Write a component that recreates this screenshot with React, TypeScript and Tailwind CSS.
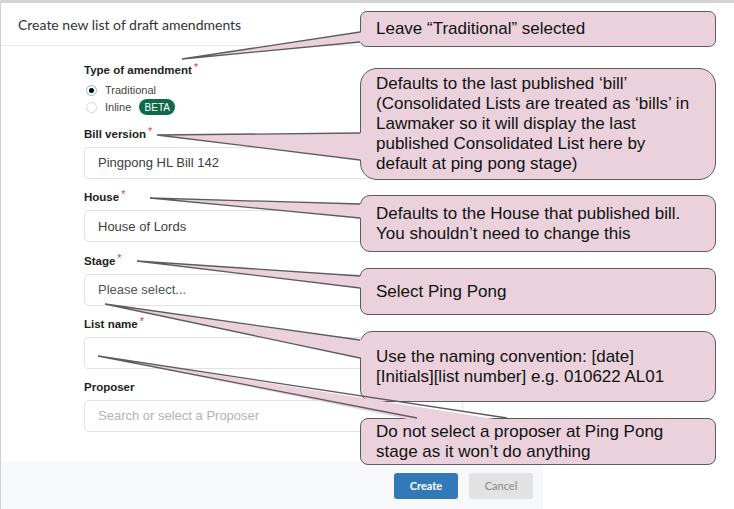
import React from "react";

const fields = [
  { label: "Bill version", required: true, value: "Pingpong HL Bill 142", tone: "text-[#3d3d3d]" },
  { label: "House", required: true, value: "House of Lords", tone: "text-[#3d3d3d]" },
  { label: "Stage", required: true, value: "Please select...", tone: "text-[#555]" },
  { label: "List name", required: true, value: "", tone: "text-[#3d3d3d]" },
  { label: "Proposer", required: false, value: "Search or select a Proposer", tone: "text-[#b3b3b3]" },
];

const callouts = [
  { top: 11, h: 36, r: "rounded-[7px]", lines: ["Leave “Traditional” selected"] },
  {
    top: 68,
    h: 112,
    r: "rounded-[17px]",
    lines: [
      "Defaults to the last published ‘bill’",
      "(Consolidated Lists are treated as ‘bills’ in",
      "Lawmaker so it will display the last",
      "published Consolidated List here by",
      "default at ping pong stage)",
    ],
  },
  {
    top: 195,
    h: 57,
    r: "rounded-[10px]",
    lines: ["Defaults to the House that published bill.", "You shouldn’t need to change this"],
  },
  { top: 268, h: 47, r: "rounded-[8px]", lines: ["Select Ping Pong"] },
  {
    top: 331,
    h: 71,
    r: "rounded-[12px]",
    lines: ["Use the naming convention: [date]", "[Initials][list number] e.g. 010622 AL01"],
  },
  {
    top: 418,
    h: 47,
    r: "rounded-[8px]",
    lines: ["Do not select a proposer at Ping Pong", "stage as it won’t do anything"],
  },
];

// tip, then the two base points on the box edge
const tails: [number, number][][] = [
  [[182, 59], [360, 32], [360, 42]],
  [[157, 135], [360, 133], [360, 160]],
  [[150, 198], [360, 204], [360, 218]],
  [[137, 261], [360, 276], [360, 288]],
  [[105, 304], [360, 340], [360, 358]],
  [[98, 356], [417, 418], [507, 418]],
];

function Label({ text, required }: { text: string; required?: boolean }) {
  return (
    <div className="flex h-[14px] items-center text-[11.5px] font-bold leading-[14px] text-[#222]">
      {text}
      {required && <span className="relative -top-[3px] ml-[2px] text-[11px] font-normal text-[#e03b3b]">*</span>}
    </div>
  );
}

function Radio({ checked, label, beta }: { checked?: boolean; label: string; beta?: boolean }) {
  return (
    <div className="flex h-[16px] items-center text-[11px] text-[#444]">
      <span
        className={
          checked
            ? "ml-[2px] flex h-[11px] w-[11px] items-center justify-center rounded-full border border-[#8bb8d6] bg-white"
            : "ml-[2px] flex h-[11px] w-[11px] items-center justify-center rounded-full border border-[#d6d6d6] bg-white"
        }
      >
        {checked && <span className="h-[5px] w-[5px] rounded-full bg-black" />}
      </span>
      <span className="ml-[8px]">{label}</span>
      {beta && (
        <span className="ml-[8px] flex h-[16px] w-[36px] items-center justify-center rounded-full bg-[#0f6a48] text-[10px] font-medium text-white">
          BETA
        </span>
      )}
    </div>
  );
}

export default function App() {
  return (
    <div className="relative h-[509px] w-[734px] overflow-hidden bg-white font-['Liberation_Sans',Arial,sans-serif]">
      <div className="h-[3px] bg-[#d3d3d3]" />
      <div className="flex h-[506px] w-[543px] flex-col border-l border-[#cfcfcf]">
        <div className="flex h-[43px] shrink-0 items-center border-b border-[#e9e9e9] pl-[17px] font-['Lato',sans-serif] text-[14px] text-[#333]">
          Create new list of draft amendments
        </div>
        <div className="flex flex-1 flex-col pl-[83px] pt-[17px]">
          <Label text="Type of amendment" required />
          <div className="mt-[5px] flex flex-col gap-[1px]">
            <Radio checked label="Traditional" />
            <Radio label="Inline" beta />
          </div>
          <div className="mt-[12px] flex flex-col gap-[11.25px]">
            {fields.map((f) => (
              <div key={f.label} className="flex flex-col">
                <Label text={f.label} required={f.required} />
                <div
                  className={`mt-[6px] flex h-[32px] w-[379px] items-center rounded-[4px] border border-[#e3e3e3] px-[13px] text-[13px] ${f.tone}`}
                >
                  {f.value}
                </div>
              </div>
            ))}
          </div>
        </div>
        <div className="flex h-[48px] shrink-0 items-start justify-end gap-[11px] bg-[#f7f8fa] pr-[10px] pt-[12px] font-['Lato',sans-serif] text-[11px]">
          <button className="h-[26px] w-[64px] rounded-[3px] bg-[#3479b7] font-bold text-white">Create</button>
          <button className="h-[26px] w-[64px] rounded-[3px] bg-[#e2e2e2] text-[#888]">Cancel</button>
        </div>
      </div>

      {callouts.map((c, i) => (
        <div
          key={i}
          className={`absolute left-[360px] flex w-[356px] flex-col justify-center border-[1.5px] border-[#5c5c5c] bg-[#ead1dc] pl-[15px] text-[17px] leading-[20px] text-[#111] ${c.r}`}
          style={{ top: c.top, height: c.h }}
        >
          {c.lines.map((l) => (
            <div key={l} className="whitespace-nowrap">
              {l}
            </div>
          ))}
        </div>
      ))}

      <svg className="pointer-events-none absolute left-0 top-0" width="734" height="509">
        {tails.map(([t, a, b], i) => {
          const vertical = a[0] === b[0];
          const fillPts = vertical
            ? `${t[0]},${t[1]} ${a[0] + 3},${a[1]} ${b[0] + 3},${b[1]}`
            : `${t[0]},${t[1]} ${a[0]},${a[1] + 3} ${b[0]},${b[1] + 3}`;
          return (
            <g key={i}>
              <polygon points={fillPts} fill="#ead1dc" />
              <polyline
                points={`${a[0]},${a[1]} ${t[0]},${t[1]} ${b[0]},${b[1]}`}
                fill="none"
                stroke="#5c5c5c"
                strokeWidth="1.3"
                strokeLinejoin="miter"
              />
            </g>
          );
        })}
      </svg>
    </div>
  );
}
